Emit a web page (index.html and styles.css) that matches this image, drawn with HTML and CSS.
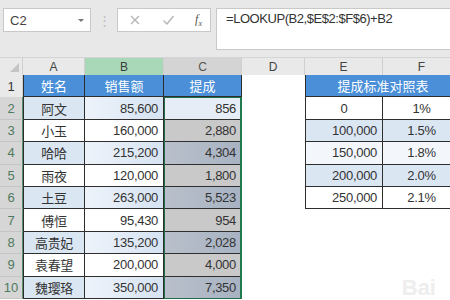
FILE: index.html
```html
<!DOCTYPE html>
<html lang="zh-CN">
<head>
  <meta charset="UTF-8" />
  <title>提成计算</title>
  <link rel="stylesheet" href="styles.css">
</head>
<body>

<div class="toolbar">
  <div class="name-box">
    <span>C2</span>
    <span class="caret"></span>
  </div>
  <div class="grip">⋮</div>
  <div class="fx-box">
    <svg width="12" height="12" viewBox="0 0 12 12"><path d="M2 2 L10 10 M10 2 L2 10" stroke="#b5b5b5" stroke-width="1.4" fill="none"/></svg>
    <svg width="13" height="12" viewBox="0 0 13 12"><path d="M1.5 6.5 L5 10 L11.5 2" stroke="#b5b5b5" stroke-width="1.4" fill="none"/></svg>
    <span class="fx"><i>f</i><sub>x</sub></span>
  </div>
  <div class="formula">=LOOKUP(B2,$E$2:$F$6)+B2</div>
</div>

<div class="sheet">
  <!-- column headers -->
  <div class="corner"><span class="tri"></span></div>
  <div class="colhead">A</div>
  <div class="colhead green">B</div>
  <div class="colhead gray">C</div>
  <div class="colhead">D</div>
  <div class="colhead">E</div>
  <div class="colhead">F</div>

  <!-- row 1 -->
  <div class="rowhead">1</div>
  <div class="cell t left hd">姓名</div>
  <div class="cell t hd">销售额</div>
  <div class="cell t hd">提成</div>
  <div class="cell"></div>
  <div class="cell t left hd span2">提成标准对照表</div>

  <!-- row 2 -->
  <div class="rowhead on">2</div>
  <div class="cell t left mid band">阿文</div>
  <div class="cell t num band-grad">85,600</div>
  <div class="cell t num active">856</div>
  <div class="cell"></div>
  <div class="cell t left mid">0</div>
  <div class="cell t mid">1%</div>

  <!-- row 3 -->
  <div class="rowhead on">3</div>
  <div class="cell t left mid">小玉</div>
  <div class="cell t num">160,000</div>
  <div class="cell t num sel">2,880</div>
  <div class="cell"></div>
  <div class="cell t left num band">100,000</div>
  <div class="cell t mid band">1.5%</div>

  <!-- row 4 -->
  <div class="rowhead on">4</div>
  <div class="cell t left mid band">哈哈</div>
  <div class="cell t num band-grad">215,200</div>
  <div class="cell t num sel-band">4,304</div>
  <div class="cell"></div>
  <div class="cell t left num light">150,000</div>
  <div class="cell t mid light">1.8%</div>

  <!-- row 5 -->
  <div class="rowhead on">5</div>
  <div class="cell t left mid">雨夜</div>
  <div class="cell t num">120,000</div>
  <div class="cell t num sel">1,800</div>
  <div class="cell"></div>
  <div class="cell t left num band">200,000</div>
  <div class="cell t mid band">2.0%</div>

  <!-- row 6 -->
  <div class="rowhead on">6</div>
  <div class="cell t left mid band">土豆</div>
  <div class="cell t num band-grad">263,000</div>
  <div class="cell t num sel-band">5,523</div>
  <div class="cell"></div>
  <div class="cell t left num">250,000</div>
  <div class="cell t mid">2.1%</div>

  <!-- row 7 -->
  <div class="rowhead on">7</div>
  <div class="cell t left mid">傅恒</div>
  <div class="cell t num">95,430</div>
  <div class="cell t num sel">954</div>
  <div class="cell"></div>
  <div class="cell"></div>
  <div class="cell"></div>

  <!-- row 8 -->
  <div class="rowhead on">8</div>
  <div class="cell t left mid band">高贵妃</div>
  <div class="cell t num band-grad">135,200</div>
  <div class="cell t num sel-band">2,028</div>
  <div class="cell"></div>
  <div class="cell"></div>
  <div class="cell"></div>

  <!-- row 9 -->
  <div class="rowhead on">9</div>
  <div class="cell t left mid">袁春望</div>
  <div class="cell t num">200,000</div>
  <div class="cell t num sel">4,000</div>
  <div class="cell"></div>
  <div class="cell"></div>
  <div class="cell"></div>

  <!-- row 10 -->
  <div class="rowhead on">10</div>
  <div class="cell t left mid band">魏璎珞</div>
  <div class="cell t num band-grad">350,000</div>
  <div class="cell t num sel-band">7,350</div>
  <div class="cell"></div>
  <div class="cell"></div>
  <div class="cell"></div>

  <!-- selection outline C2:C10 -->
  <div class="selection"></div>
</div>

<div class="watermark">Bai</div>

</body>
</html>
```

FILE: styles.css
```css
* {
  box-sizing: border-box;
}

body {
  margin: 0;
  width: 450px;
  height: 300px;
  overflow: hidden;
  position: relative;
  background: #fff;
  font-family: "Liberation Sans", "Noto Sans CJK SC", sans-serif;
  color: #333;
}

/* Formula bar */
.toolbar {
  height: 57px;
  background: #e8e8e8;
  display: flex;
  align-items: flex-start;
  padding-top: 8px;
}

.name-box {
  margin-left: 3px;
  width: 88px;
  height: 24px;
  background: #fff;
  border: 1px solid #c8c8c8;
  display: flex;
  align-items: center;
  justify-content: space-between;
  padding: 0 6px 0 6px;
  font-size: 13px;
  color: #444;
}

.caret {
  width: 0;
  height: 0;
  border-left: 3px solid transparent;
  border-right: 3px solid transparent;
  border-top: 3px solid #777;
}

.grip {
  width: 26px;
  height: 24px;
  display: flex;
  align-items: center;
  justify-content: center;
  color: #bdbdbd;
  font-size: 13px;
}

.fx-box {
  width: 94px;
  height: 24px;
  background: #fff;
  border: 1px solid #c8c8c8;
  display: flex;
  align-items: center;
  justify-content: space-between;
  padding: 0 8px 0 11px;
}

.fx {
  font-family: "Liberation Serif", serif;
  font-size: 12px;
  color: #555;
}

.fx sub {
  font-size: 8px;
  font-style: italic;
}

.formula {
  flex: 1;
  margin-left: 5px;
  height: 42px;
  background: #fff;
  border: 1px solid #c8c8c8;
  border-right: none;
  padding: 2px 0 0 9px;
  font-size: 13px;
  letter-spacing: -0.45px;
  color: #333;
}

/* Sheet grid */
.sheet {
  position: relative;
  display: grid;
  grid-template-columns: 23px 62px 79px 78px 63px 78px 78px;
  grid-template-rows: 18px repeat(10, 22.4px);
  width: 461px;
}

.corner {
  background: #e9e9e9;
  border-top: 1px solid #d4d4d4;
  border-right: 1px solid #d0d0d0;
  position: relative;
}

.tri {
  position: absolute;
  right: 3px;
  bottom: 3px;
  width: 0;
  height: 0;
  border-left: 9px solid transparent;
  border-bottom: 9px solid #c4c4c4;
}

.colhead {
  background: #e9e9e9;
  border-top: 1px solid #d4d4d4;
  border-right: 1px solid #cfcfcf;
  display: flex;
  align-items: center;
  justify-content: center;
  font-size: 12px;
  color: #444;
}

.colhead.green {
  background: #a9d8b8;
  color: #3b3b3b;
}

.colhead.gray {
  background: #d4d4d4;
  color: #555;
}

.rowhead {
  background: #e9e9e9;
  border-right: 1px solid #cfcfcf;
  display: flex;
  align-items: center;
  justify-content: center;
  font-size: 13px;
  color: #333;
}

.rowhead.on {
  background: #d6d6d6;
  color: #4f7a5e;
  border-right: 1px solid #5c8f70;
  border-bottom: 1px solid #c4c4c4;
}

.cell {
  display: flex;
  align-items: center;
  padding: 0 5px;
  font-size: 13px;
  letter-spacing: -0.3px;
  color: #333;
  background: #fff;
}

.cell.t {
  border-right: 1px solid #2e2e2e;
  border-bottom: 1px solid #2e2e2e;
}

.cell.left {
  border-left: 1px solid #2e2e2e;
}

.cell.hd {
  background: #4a8fd8;
  color: #fff;
  justify-content: center;
  letter-spacing: 0;
}

.span2 {
  grid-column: span 2;
}

.mid {
  justify-content: center;
}

.num {
  justify-content: flex-end;
}

.band {
  background: #dbe6f3;
}

.band-grad {
  background: linear-gradient(to right, #eef3fa, #d6e3f2);
}

.light {
  background: #f3f7fc;
}

.active {
  background: #e6edf6;
}

.sel {
  background: #c9c9c9;
}

.sel-band {
  background: linear-gradient(to right, #b9c0cb, #a8b2c2);
}

/* outline drawn over the selected range C2:C10 */
.selection {
  position: absolute;
  left: 164px;
  top: 40.4px;
  width: 78px;
  height: 201.6px;
  border: 1px solid #1f6e47;
  border-right: 2px solid #1f7a4d;
  pointer-events: none;
}

/* faint watermark */
.watermark {
  position: absolute;
  right: 14px;
  bottom: 0;
  font-size: 22px;
  font-weight: bold;
  line-height: 24px;
  color: #eeeeee;
}
```
